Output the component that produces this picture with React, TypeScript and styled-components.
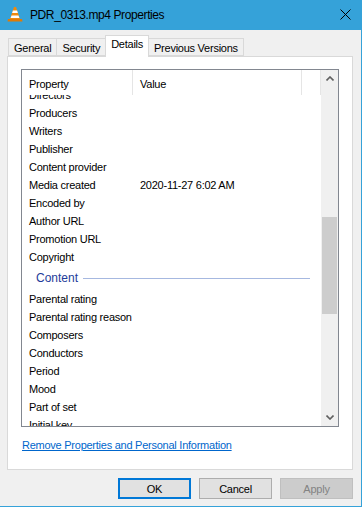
import styled, { createGlobalStyle } from "styled-components";

const GlobalStyle = createGlobalStyle`
  html, body {
    margin: 0;
    padding: 0;
    background: #f0f0f0;
  }
  body {
    font-family: "Liberation Sans", Arial, sans-serif;
    font-size: 11px;
    letter-spacing: -0.25px;
    color: #000;
  }
`;

type Row = { name: string; value?: string } | { group: string };

const rows: Array<Row> = [
  { name: "Directors" },
  { name: "Producers" },
  { name: "Writers" },
  { name: "Publisher" },
  { name: "Content provider" },
  { name: "Media created", value: "2020-11-27 6:02 AM" },
  { name: "Encoded by" },
  { name: "Author URL" },
  { name: "Promotion URL" },
  { name: "Copyright" },
  { group: "Content" },
  { name: "Parental rating" },
  { name: "Parental rating reason" },
  { name: "Composers" },
  { name: "Conductors" },
  { name: "Period" },
  { name: "Mood" },
  { name: "Part of set" },
  { name: "Initial key" },
];

const tabs = ["General", "Security", "Details", "Previous Versions"];

const VlcIcon = () => (
  <svg width="16" height="17" viewBox="0 0 16 17">
    <path d="M7 1 L9 1 L13 13 L3 13 Z" fill="#f08a0c" />
    <path d="M5.9 4.5 L10.1 4.5 L10.9 7 L5.1 7 Z" fill="#ffffff" />
    <path d="M4.5 9.5 L11.5 9.5 L12.4 12 L3.6 12 Z" fill="#ffffff" />
    <path d="M1 13 L15 13 L15.5 15.5 L0.5 15.5 Z" fill="#e07a06" />
  </svg>
);

const Chevron = ({ down }: { down?: boolean }) => (
  <svg width="8" height="5" viewBox="0 0 8 5">
    <path
      d={down ? "M0.5 0.5 L4 4 L7.5 0.5" : "M0.5 4.5 L4 1 L7.5 4.5"}
      fill="none"
      stroke="#606060"
      strokeWidth="1.6"
    />
  </svg>
);

export default function App() {
  return (
    <>
      <GlobalStyle />
      <Window>
        <TitleBar>
          <VlcIcon />
          <Title>PDR_0313.mp4 Properties</Title>
          <CloseButton>
            <svg width="11" height="11" viewBox="0 0 11 11">
              <path d="M0.5 0.5 L10.5 10.5 M10.5 0.5 L0.5 10.5" stroke="#000" strokeWidth="1" />
            </svg>
          </CloseButton>
        </TitleBar>
        <Body>
          <TabStrip>
            {tabs.map((t) => (
              <Tab key={t} $active={t === "Details"}>
                {t}
              </Tab>
            ))}
          </TabStrip>
          <Panel>
            <ListBox>
              <ListContent>
                <Header>
                  <HeaderCell $width={111}>Property</HeaderCell>
                  <HeaderCell $width={169}>Value</HeaderCell>
                  <HeaderCell $width={19} />
                </Header>
                <Viewport>
                  <Rows>
                    {rows.map((r, i) =>
                      "group" in r ? (
                        <GroupRow key={i}>
                          <GroupLabel>{r.group}</GroupLabel>
                          <GroupLine />
                        </GroupRow>
                      ) : (
                        <ItemRow key={i}>
                          <NameCell>{r.name}</NameCell>
                          <ValueCell>{r.value}</ValueCell>
                        </ItemRow>
                      )
                    )}
                  </Rows>
                </Viewport>
              </ListContent>
              <ScrollBar>
                <ArrowButton>
                  <Chevron />
                </ArrowButton>
                <Track>
                  <Thumb />
                </Track>
                <ArrowButton>
                  <Chevron down />
                </ArrowButton>
              </ScrollBar>
            </ListBox>
            <Link>Remove Properties and Personal Information</Link>
          </Panel>
          <ButtonRow>
            <Button $default>OK</Button>
            <Button>Cancel</Button>
            <Button $disabled>Apply</Button>
          </ButtonRow>
        </Body>
      </Window>
    </>
  );
}

const Window = styled.div`
  width: 362px;
  height: 507px;
  box-sizing: border-box;
  background: #f0f0f0;
  border-right: 1px solid #35a2d9;
  border-bottom: 1px solid #35a2d9;
  display: flex;
  flex-direction: column;
`;

const TitleBar = styled.div`
  height: 29px;
  background: #35a2d9;
  display: flex;
  align-items: center;
  padding-left: 7px;
  padding-bottom: 1px;
`;

const Title = styled.div`
  font-size: 12px;
  letter-spacing: -0.4px;
  margin-left: 7px;
  color: #000;
`;

const CloseButton = styled.div`
  margin-left: auto;
  width: 46px;
  height: 29px;
  display: flex;
  align-items: center;
  justify-content: center;
  margin-right: -7px;
`;

const Body = styled.div`
  padding: 6px 8px 0 7px;
  display: flex;
  flex-direction: column;
`;

const TabStrip = styled.div`
  display: flex;
  align-items: flex-end;
  height: 20px;
  padding-left: 1px;
  position: relative;
  z-index: 1;
`;

const Tab = styled.div<{ $active?: boolean }>`
  box-sizing: border-box;
  height: ${(p) => (p.$active ? "22px" : "18px")};
  margin-bottom: ${(p) => (p.$active ? "-1px" : "0")};
  margin-left: -1px;
  padding: 2px 5px 0;
  border: 1px solid #d9d9d9;
  border-bottom: ${(p) => (p.$active ? "none" : "1px solid #d9d9d9")};
  background: ${(p) => (p.$active ? "#ffffff" : "#f0f0f0")};
  display: flex;
  align-items: ${(p) => (p.$active ? "flex-start" : "center")};
  white-space: nowrap;
  &:first-child {
    margin-left: 0;
  }
`;

const Panel = styled.div`
  box-sizing: border-box;
  height: 414px;
  border: 1px solid #d9d9d9;
  background: #ffffff;
  padding: 12px 0 0 13px;
`;

const ListBox = styled.div`
  box-sizing: border-box;
  width: 318px;
  height: 358px;
  border: 1px solid #828790;
  display: flex;
`;

const ListContent = styled.div`
  width: 299px;
  display: flex;
  flex-direction: column;
`;

const Header = styled.div`
  height: 25px;
  display: flex;
  flex-shrink: 0;
`;

const HeaderCell = styled.div<{ $width: number }>`
  width: ${(p) => p.$width}px;
  box-sizing: border-box;
  border-right: 1px solid #e5e5e5;
  padding-left: 7px;
  display: flex;
  align-items: center;
  padding-top: 3px;
`;

const Viewport = styled.div`
  flex: 1;
  overflow: hidden;
`;

const Rows = styled.div`
  margin-top: -9px;
`;

const ItemRow = styled.div`
  height: 18px;
  display: flex;
  align-items: center;
`;

const NameCell = styled.div`
  width: 111px;
  padding-left: 7px;
  box-sizing: border-box;
  white-space: nowrap;
`;

const ValueCell = styled.div`
  padding-left: 7px;
  white-space: nowrap;
`;

const GroupRow = styled.div`
  height: 24px;
  display: flex;
  align-items: center;
  padding-left: 14px;
  padding-right: 11px;
`;

const GroupLabel = styled.div`
  color: #1e3c9a;
  font-size: 12px;
  letter-spacing: 0;
`;

const GroupLine = styled.div`
  flex: 1;
  height: 1px;
  background: #a6b8e0;
  margin-left: 5px;
`;

const ScrollBar = styled.div`
  width: 17px;
  background: #f0f0f0;
  display: flex;
  flex-direction: column;
`;

const ArrowButton = styled.div`
  height: 17px;
  display: flex;
  align-items: center;
  justify-content: center;
`;

const Track = styled.div`
  flex: 1;
  padding-top: 130px;
`;

const Thumb = styled.div`
  width: 15px;
  height: 97px;
  margin-left: 1px;
  background: #cdcdcd;
`;

const Link = styled.div`
  margin-top: 12px;
  margin-left: 1px;
  color: #0066cc;
  text-decoration: underline;
`;

const ButtonRow = styled.div`
  display: flex;
  justify-content: flex-end;
  gap: 8px;
  margin-top: 8px;
  padding-right: 0;
`;

const Button = styled.div<{ $default?: boolean; $disabled?: boolean }>`
  box-sizing: border-box;
  width: 73px;
  height: 21px;
  display: flex;
  align-items: center;
  justify-content: center;
  background: ${(p) => (p.$disabled ? "#cccccc" : "#e1e1e1")};
  color: ${(p) => (p.$disabled ? "#838383" : "#000")};
  border: ${(p) =>
    p.$default ? "2px solid #0078d7" : p.$disabled ? "1px solid #bfbfbf" : "1px solid #adadad"};
`;
